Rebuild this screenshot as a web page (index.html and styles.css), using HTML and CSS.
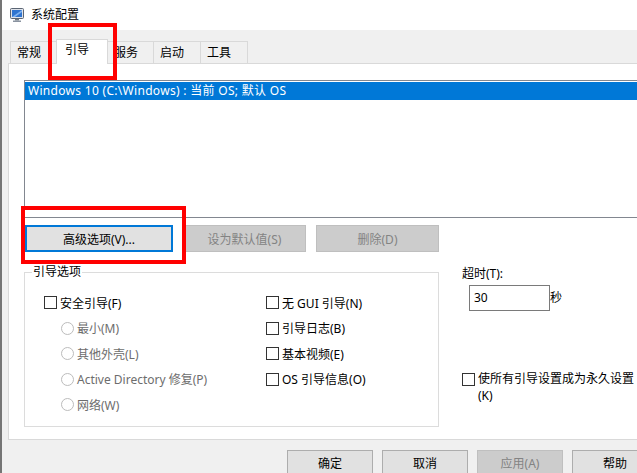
FILE: index.html
```html
<!DOCTYPE html>
<html lang="zh-CN">
<head>
<meta charset="utf-8">
<title>系统配置</title>
<link rel="stylesheet" href="styles.css">
</head>
<body>
<div class="window">
  <div class="titlebar">
    <svg class="app-icon" width="14" height="14" viewBox="0 0 14 14">
      <rect x="0.5" y="0.5" width="13" height="10" rx="1" fill="#dfe3ea" stroke="#5b6573"/>
      <rect x="2" y="2" width="10" height="7" fill="#2f74d0"/>
      <path d="M2 9 L12 2 L12 4 L5 9 Z" fill="#7fb2ef"/>
      <rect x="5" y="11" width="4" height="1.5" fill="#6d7684"/>
      <rect x="3" y="12.5" width="8" height="1.5" fill="#8a93a0"/>
    </svg>
    <span class="title">系统配置</span>
  </div>

  <div class="client">
    <div class="tabs">
      <div class="tab">常规</div>
      <div class="tab active">引导</div>
      <div class="tab">服务</div>
      <div class="tab wide">启动</div>
      <div class="tab wide">工具</div>
    </div>

    <div class="panel">
      <div class="listbox">
        <div class="list-item selected">Windows 10 (C:\Windows) : 当前 OS; 默认 OS</div>
      </div>

      <div class="list-buttons">
        <button class="btn btn-default btn-adv">高级选项(V)...</button>
        <button class="btn btn-disabled btn-mid">设为默认值(S)</button>
        <button class="btn btn-disabled btn-mid">删除(D)</button>
      </div>

      <div class="lower">
        <fieldset class="group">
          <legend>引导选项</legend>
          <div class="group-cols">
            <div class="col col-left">
              <label class="opt"><span class="check"></span>安全引导(F)</label>
              <label class="opt sub disabled"><span class="radio"></span>最小(M)</label>
              <label class="opt sub disabled"><span class="radio"></span>其他外壳(L)</label>
              <label class="opt sub disabled"><span class="radio"></span>Active Directory 修复(P)</label>
              <label class="opt sub disabled"><span class="radio"></span>网络(W)</label>
            </div>
            <div class="col col-right">
              <label class="opt"><span class="check"></span>无 GUI 引导(N)</label>
              <label class="opt"><span class="check"></span>引导日志(B)</label>
              <label class="opt"><span class="check"></span>基本视频(E)</label>
              <label class="opt"><span class="check"></span>OS 引导信息(O)</label>
            </div>
          </div>
        </fieldset>

        <div class="side">
          <div class="timeout-label">超时(T):</div>
          <div class="timeout-row">
            <div class="edit">30</div>
            <span class="unit">秒</span>
          </div>
          <label class="perm"><span class="check"></span><span class="perm-text">使所有引导设置成为永久设置(K)</span></label>
        </div>
      </div>
    </div>

    <div class="dialog-buttons">
      <button class="btn btn-foot">确定</button>
      <button class="btn btn-foot">取消</button>
      <button class="btn btn-foot btn-disabled">应用(A)</button>
      <button class="btn btn-foot">帮助</button>
    </div>
  </div>

  <div class="mark mark-tab"></div>
  <div class="mark mark-adv"></div>
</div>
</body>
</html>
```

FILE: styles.css
```css
* { box-sizing: border-box; }

html, body {
  margin: 0;
  padding: 0;
  width: 637px;
  height: 473px;
  overflow: hidden;
  background: #f0f0f0;
}

body {
  font-family: "Noto Sans", "Noto Sans CJK SC", sans-serif;
  font-size: 12px;
  color: #000;
}

.window {
  position: relative;
  width: 680px;
  height: 500px;
  border-left: 2px solid #757575;
  background: #f0f0f0;
}

.titlebar {
  height: 30px;
  background: #fff;
  display: flex;
  align-items: center;
  padding-left: 8px;
  gap: 7px;
}

.app-icon { display: block; margin-top: -1px; }

.title { font-size: 12px; line-height: 16px; }

.client {
  padding-left: 6px;
}

.tabs {
  display: flex;
  align-items: flex-end;
  height: 33px;
  padding-left: 2px;
}

.tab {
  width: 47px;
  height: 22px;
  margin-right: -1px;
  border: 1px solid #d9d9d9;
  border-bottom: none;
  background: #f0f0f0;
  padding-left: 6px;
  line-height: 21px;
  font-size: 12px;
}

.tab.wide { width: 48px; }

.tab.active {
  position: relative;
  z-index: 1;
  width: 52px;
  height: 25px;
  margin-bottom: -1px;
  background: #fff;
  padding-left: 8px;
  line-height: 19px;
}

.panel {
  height: 377px;
  border: 1px solid #d9d9d9;
  background: #fff;
  padding: 16px 0 0 15px;
}

.listbox {
  height: 138px;
  border: 1px solid #828790;
  background: #fff;
  padding: 1px 0 0 0;
}

.list-item {
  height: 18px;
  line-height: 18px;
  padding-left: 3px;
  letter-spacing: 0.3px;
}

.list-item.selected {
  background: #0078d7;
  color: #fff;
}

.list-buttons {
  display: flex;
  gap: 10px;
  margin-top: 7px;
  margin-left: 1px;
}

.btn {
  font-family: inherit;
  font-size: 12px;
  height: 27px;
  padding: 0;
  margin: 0;
  background: #e1e1e1;
  border: 1px solid #adadad;
  color: #000;
}

.btn-adv { width: 148px; }
.btn-mid { width: 123px; }

.btn-default {
  border: 2px solid #0078d7;
}

.btn-disabled {
  background: #cccccc;
  border-color: #bfbfbf;
  color: #838383;
}

.lower {
  display: flex;
  align-items: flex-start;
  margin-top: 12px;
}

.group {
  width: 415px;
  margin: 0;
  padding: 10px 0 8px 19px;
  border: 1px solid #dcdcdc;
}

.group legend {
  margin-left: -12px;
  padding: 0 1px;
  line-height: 16px;
  font-size: 12px;
}

.group-cols {
  display: flex;
}

.col {
  display: flex;
  flex-direction: column;
}

.col-left { width: 222px; }

.opt {
  display: flex;
  align-items: center;
  gap: 3px;
  height: 25.5px;
  white-space: nowrap;
}

.opt.sub { padding-left: 17px; }

.opt.disabled { color: #6d6d6d; }

.check {
  display: inline-block;
  width: 13px;
  height: 13px;
  border: 1px solid #333;
  background: #fff;
  flex: none;
}

.radio {
  display: inline-block;
  width: 13px;
  height: 13px;
  border: 1px solid #bcbcbc;
  border-radius: 50%;
  background: #fff;
  flex: none;
}

.side {
  margin-left: 23px;
  display: flex;
  flex-direction: column;
  padding-top: 2px;
}

.timeout-label {
  line-height: 16px;
}

.timeout-row {
  display: flex;
  align-items: center;
  margin-top: 3px;
  margin-left: 7px;
}

.edit {
  width: 81px;
  height: 26px;
  border: 1px solid #7a7a7a;
  background: #fff;
  padding-left: 4px;
  line-height: 24px;
}

.unit { line-height: 16px; }

.perm {
  display: flex;
  align-items: flex-start;
  gap: 3px;
  margin-top: 59px;
}

.perm .check { margin-top: 3px; }

.perm-text {
  width: 160px;
  line-height: 17px;
}

.dialog-buttons {
  display: flex;
  justify-content: flex-end;
  gap: 9px;
  margin-top: 10px;
  padding-right: 22px;
}

.btn-foot {
  width: 86px;
  height: 26px;
}

.mark {
  position: absolute;
  border: 4px solid #ff0000;
  pointer-events: none;
}

.mark-tab {
  left: 46px;
  top: 23px;
  width: 69px;
  height: 57px;
}

.mark-adv {
  left: 19px;
  top: 206px;
  width: 165px;
  height: 58px;
}
```
